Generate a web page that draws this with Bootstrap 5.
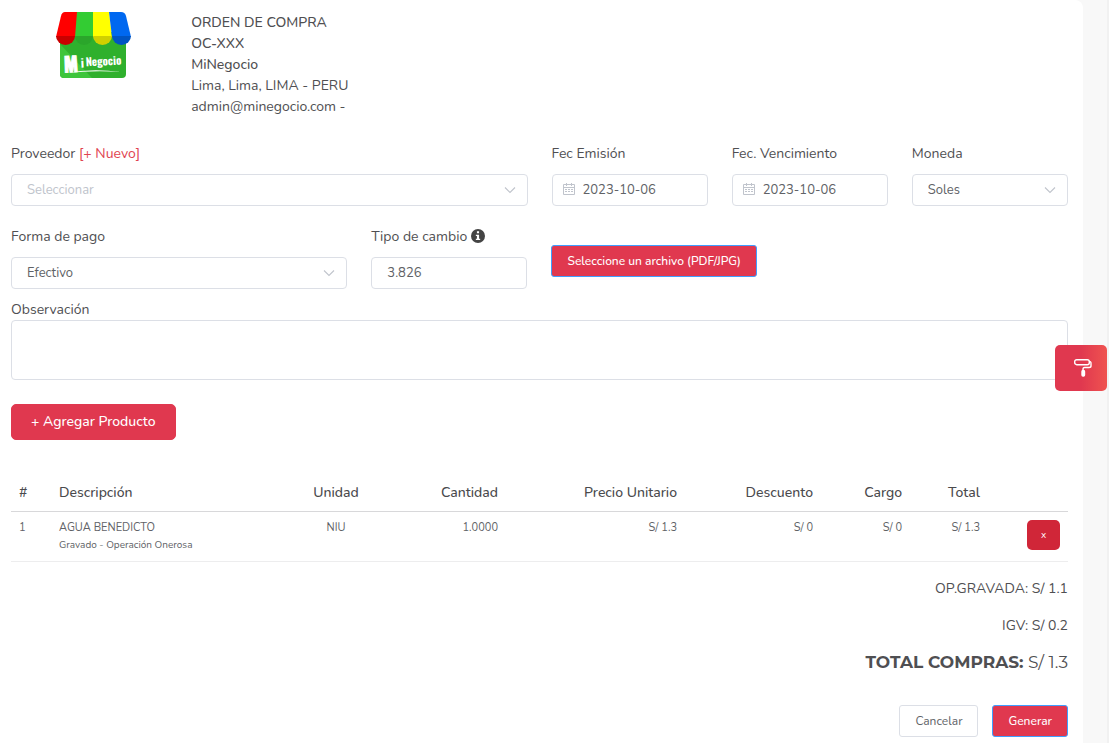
<!DOCTYPE html>
<html lang="es">
<head>
<meta charset="utf-8">
<meta name="viewport" content="width=device-width, initial-scale=1">
<title>Orden de compra</title>
<link href="https://cdn.jsdelivr.net/npm/bootstrap@5.3.0/dist/css/bootstrap.min.css" rel="stylesheet">
<style>
body { background: #f8f8f8; border-right: 2px solid #f1f1f1; color: #4f4f52; font-family: Nunito, "Open Sans", sans-serif; font-size: 14px; line-height: 21px; min-height: 100vh; }
.sheet { background: #fff; margin-right: 24px; padding: 12px 15px 6px 11px; border-top-right-radius: 8px; min-height: 100vh; }
.brand-logo { width: 76px; height: 68px; }
.brand-col { padding-left: 20px; }
.first-row { padding-top: 26px; }
.form-label { margin-bottom: 10px; line-height: 21px; display: block; }
.form-control, .form-select { height: 32px; padding: 0 15px; border: 1px solid #dcdfe6; border-radius: 4px; font-size: 13px; line-height: 30px; color: #606266; background-color: #fff; }
.form-select { background-image: url("data:image/svg+xml,%3Csvg xmlns='http://www.w3.org/2000/svg' viewBox='0 0 12 8'%3E%3Cpath d='M1 1.5l5 5 5-5' fill='none' stroke='%23c0c4cc' stroke-width='1.1'/%3E%3C/svg%3E"); background-size: 12px 8px; background-position: right 11px center; }
.form-select.unset { color: #c0c4cc; }
.date-box .form-control { padding-left: 30px; }
.date-box svg { position: absolute; left: 11px; top: 9px; }
.second-row { margin-top: 20px; }
.info-icon { vertical-align: -2px; }
.file-col { padding-top: 19px; }
.obs-label { padding-top: 10px; margin-bottom: 0; }
textarea.form-control { height: 60px; display: block; }
.link-new { color: #df4450; text-decoration: none; }
.btn { font-size: 12px; line-height: 20px; border-radius: 3px; padding: 5px 15px; }
.btn-main { --bs-btn-color: #fff; --bs-btn-bg: #e0384f; --bs-btn-border-color: #409eff; --bs-btn-hover-color: #fff; --bs-btn-hover-bg: #cd2b42; font-weight: 500; }
.btn-plain { --bs-btn-color: #606266; --bs-btn-border-color: #dcdfe6; --bs-btn-bg: #fff; }
.btn-add { --bs-btn-border-color: #e0384f; font-size: 14px; line-height: 24px; padding: 5px 19px; border-radius: 5px; }
.btn-remove { --bs-btn-color: #fff; --bs-btn-bg: #d02638; --bs-btn-hover-bg: #b51f30; --bs-btn-hover-color: #fff; font-size: 10px; width: 33px; height: 30px; padding: 0; border: 0; border-radius: 5px; display: block; margin-left: auto; }
.items { --bs-table-color: #4a4a4d; table-layout: fixed; border-color: #ededee; margin: 32px 0 0; }
.items th { font-weight: 500; padding: 10px 8px 8px; border-bottom-color: #d8d8da; }
.items td { padding: 8px 8px 7px; font-size: 11px; line-height: 16px; color: #606266; }
.items small { font-size: 10px; line-height: 18px; display: block; }
.grand { font-family: Montserrat, Inter, sans-serif; font-size: 17px; line-height: 21px; }
.grand b { font-weight: 700; }
.form-actions { gap: 14px; }
.theme-btn { position: fixed; right: 2px; top: 345px; width: 52px; height: 46px; border: 0; border-radius: 5px; padding: 0 0 2px 4px; background: linear-gradient(90deg, #e0384f 50%, #ef5350); color: #fff; }
</style>
</head>
<body>
<main class="sheet">
  <header class="row">
    <div class="col-2 text-center brand-col">
      <svg class="brand-logo" viewBox="0 0 76 68" role="img" aria-label="Mi Negocio">
        <rect x="5" y="20" width="66" height="46" rx="4" fill="#2fb02d"/>
        <path d="M5 32l32 34H9q-4 0-4-4z" fill="#3ec53c"/>
        <path d="M10 0h13l-2 25H1L6 4q1-4 4-4z" fill="#f00"/><path d="M22 0h17v25H20z" fill="#33cc33"/><path d="M38 0h16l3 25H38z" fill="#ff0"/><path d="M54 0h12q4 0 5 4l5 21H57z" fill="#0068f0"/>
        <path d="M1 24h19a9.500 9 0 0 1-19 0z" fill="#c90000"/><path d="M20 24h18a9 9 0 0 1-18 0z" fill="#2ba62b"/><path d="M38 24h19a9.500 9 0 0 1-19 0z" fill="#d0d000"/><path d="M57 24h19a9.500 9 0 0 1-19 0z" fill="#0054c2"/>
        <g fill="#fff" font-family="Oswald, Roboto Condensed, Liberation Sans Narrow, sans-serif" font-weight="700" transform="rotate(-3 38 55)"><text x="9" y="59" font-size="20" stroke="#fff">M</text><text x="26" y="55" font-size="12">i</text><text x="31" y="54" font-size="11">Negocio</text></g>
        <path d="M11 61q26-5 55-1-26-2-55 1z" fill="#fff"/>
      </svg>
    </div>
    <div class="col-10">
      <div class="fw-medium">ORDEN DE COMPRA</div>
      <div class="fw-medium">OC-XXX</div>
      <div class="fw-medium">MiNegocio</div>
      <div>Lima, Lima, LIMA - PERU</div>
      <div>admin@minegocio.com -</div>
    </div>
  </header>

  <form>
    <div class="row first-row">
      <div class="col-6"><label class="form-label" for="prov">Proveedor <a class="link-new" href="#">[+ Nuevo]</a></label>
        <select class="form-select unset" id="prov"><option>Seleccionar</option></select></div>
      <div class="col-2"><label class="form-label" for="fe">Fec Emisión</label>
        <div class="position-relative date-box"><svg width="12" height="13" fill="none" stroke="#c0c4cc"><path d="M.5 1.500h11v10H.5zM.5 4.500h11M3.500 0v3M8.500 0v3"/><path d="M2 6.500h8M2 8.500h8" stroke-dasharray="2 1"/></svg><input class="form-control" id="fe" value="2023-10-06"></div></div>
      <div class="col-2"><label class="form-label" for="fv">Fec. Vencimiento</label>
        <div class="position-relative date-box"><svg width="12" height="13" fill="none" stroke="#c0c4cc"><path d="M.5 1.500h11v10H.5zM.5 4.500h11M3.500 0v3M8.500 0v3"/><path d="M2 6.500h8M2 8.500h8" stroke-dasharray="2 1"/></svg><input class="form-control" id="fv" value="2023-10-06"></div></div>
      <div class="col-2"><label class="form-label" for="mon">Moneda</label>
        <select class="form-select" id="mon"><option>Soles</option></select></div>
    </div>
    <div class="row second-row">
      <div class="col-4"><label class="form-label" for="fp">Forma de pago</label>
        <select class="form-select" id="fp"><option>Efectivo</option></select></div>
      <div class="col-2"><label class="form-label" for="tc">Tipo de cambio <svg width="14" height="14" viewBox="0 0 13 13" class="info-icon"><circle cx="6.500" cy="6.500" r="6.500" fill="#444"/><path d="M5.500 2h2v2h-2zM4.500 5.300h3v3.700h1v1.300h-4V9h1V6.600h-1z" fill="#fff"/></svg></label>
        <input class="form-control" id="tc" value="3.826"></div>
      <div class="col-6 file-col"><button type="button" class="btn btn-main">Seleccione un archivo (PDF/JPG)</button></div>
    </div>
    <label class="form-label obs-label" for="obs">Observación</label>
    <textarea class="form-control" id="obs"></textarea>
    <button type="button" class="btn btn-main btn-add mt-4">+ Agregar Producto</button>

    <table class="table items">
      <colgroup><col style="width:40px"><col><col style="width:62px"><col style="width:139px"><col style="width:179px"><col style="width:136px"><col style="width:89px"><col style="width:78px"><col style="width:80px"></colgroup>
      <thead><tr><th>#</th><th>Descripción</th><th class="text-center">Unidad</th><th class="text-end">Cantidad</th><th class="text-end">Precio Unitario</th><th class="text-end">Descuento</th><th class="text-end">Cargo</th><th class="text-end">Total</th><th></th></tr></thead>
      <tbody><tr><td>1</td><td>AGUA BENEDICTO<small>Gravado - Operación Onerosa</small></td><td class="text-center">NIU</td><td class="text-end">1.0000</td><td class="text-end">S/ 1.3</td><td class="text-end">S/ 0</td><td class="text-end">S/ 0</td><td class="text-end">S/ 1.3</td><td><button type="button" class="btn btn-remove">x</button></td></tr></tbody>
    </table>
    <div class="text-end pt-3">
      <p>OP.GRAVADA: S/ 1.1</p>
      <p>IGV: S/ 0.2</p>
      <p class="grand"><b>TOTAL COMPRAS:</b> S/ 1.3</p>
    </div>
    <div class="d-flex justify-content-end form-actions pt-3"><button type="button" class="btn btn-plain">Cancelar</button><button type="submit" class="btn btn-main">Generar</button></div>
  </form>
</main>
<button type="button" class="theme-btn" aria-label="Tema"><svg width="20" height="20" viewBox="0 0 20 20" fill="none" stroke="#fff" stroke-width="1.400"><rect x="1.700" y="1.700" width="14.600" height="5" rx="2"/><path d="M16.300 3.500q2 0 1.700 2.500v2q0 1.500-2 1.500h-4.500q-1.500 0-1.500 2v1"/><rect x="9" y="12.500" width="2.500" height="5.500" rx="1" fill="#fff"/></svg></button>
<script src="https://cdn.jsdelivr.net/npm/bootstrap@5.3.0/dist/js/bootstrap.bundle.min.js"></script>
</body>
</html>
